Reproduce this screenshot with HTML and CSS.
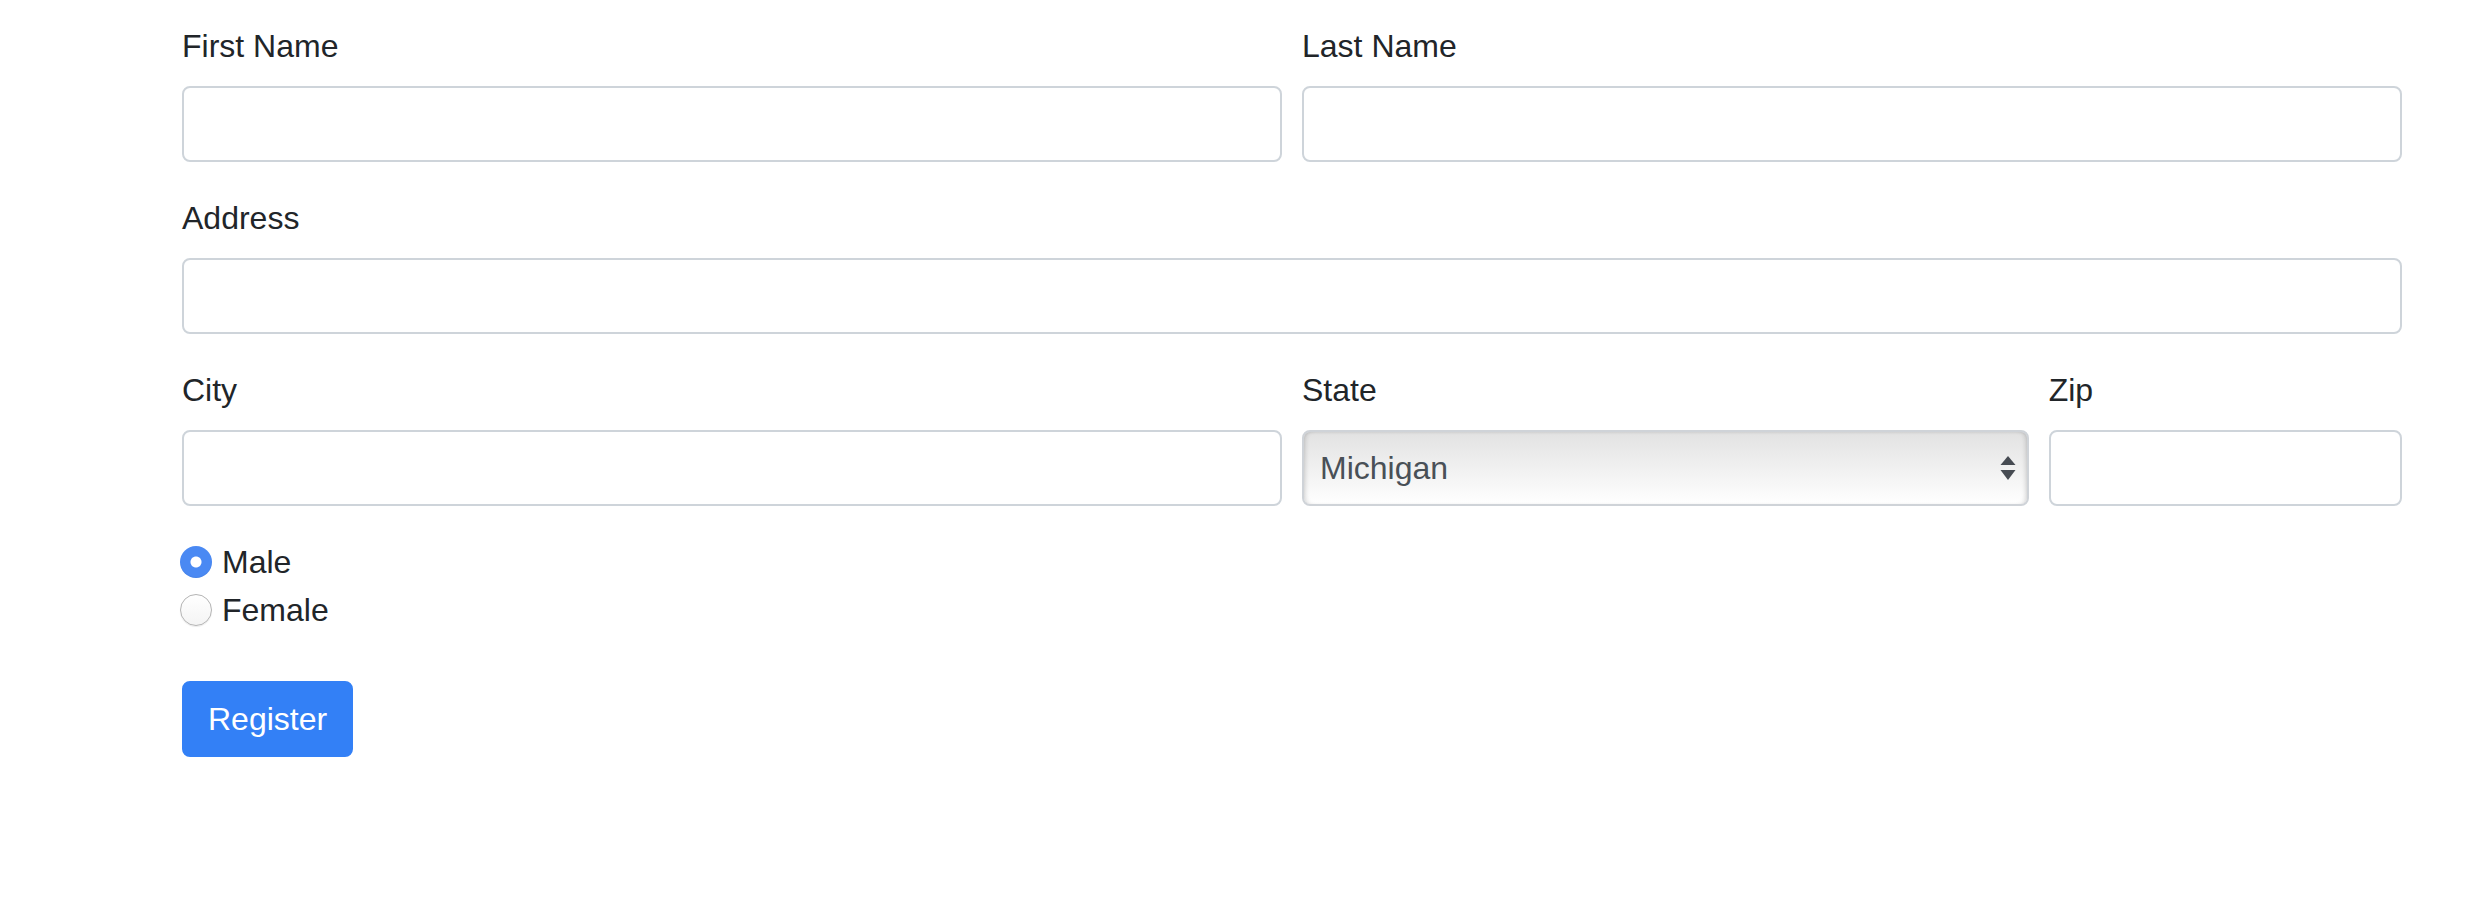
FILE: index.html
```html
<!DOCTYPE html>
<html>
<head>
<meta charset="utf-8">
<title>Register</title>
<link rel="stylesheet" href="styles.css">
</head>
<body>
<form class="page">
  <div class="grid">
    <div class="group span6">
      <label class="label" for="fn">First Name</label>
      <input class="control" id="fn" type="text">
    </div>
    <div class="group span6">
      <label class="label" for="ln">Last Name</label>
      <input class="control" id="ln" type="text">
    </div>
  </div>
  <div class="group">
    <label class="label" for="addr">Address</label>
    <input class="control" id="addr" type="text">
  </div>
  <div class="grid">
    <div class="group span6">
      <label class="label" for="city">City</label>
      <input class="control" id="city" type="text">
    </div>
    <div class="group span4">
      <label class="label" for="state">State</label>
      <div class="select-wrap">
        <select class="control select" id="state">
          <option>Michigan</option>
        </select>
        <svg class="arrows" width="16" height="26" viewBox="0 0 16 26">
          <path d="M8 0 L15.5 9 L0.5 9 Z" fill="#464b52"/>
          <path d="M0.5 14 L15.5 14 L8 24 Z" fill="#464b52"/>
        </svg>
      </div>
    </div>
    <div class="group span2">
      <label class="label" for="zip">Zip</label>
      <input class="control" id="zip" type="text">
    </div>
  </div>
  <div class="radios">
    <label class="check"><input class="radio" type="radio" name="g" checked><span>Male</span></label>
    <label class="check"><input class="radio" type="radio" name="g"><span>Female</span></label>
  </div>
  <button class="btn" type="button">Register</button>
</form>
</body>
</html>
```

FILE: styles.css
```css
* { box-sizing: border-box; }
html, body { margin: 0; padding: 0; background: #fff; }
body {
  font-family: "Liberation Sans", Arial, sans-serif;
  font-size: 32px;
  line-height: 48px;
  color: #212529;
}
.page {
  width: 2220px;
  margin-left: 182px;
  padding-top: 22px;
}
.grid {
  display: grid;
  grid-template-columns: repeat(12, 1fr);
  column-gap: 20px;
}
.span6 { grid-column: span 6; }
.span4 { grid-column: span 4; }
.span2 { grid-column: span 2; }
.group { margin-bottom: 32px; }
.label {
  display: block;
  margin-bottom: 16px;
  line-height: 48px;
}
.control {
  display: block;
  width: 100%;
  height: 76px;
  padding: 12px 24px;
  font-family: inherit;
  font-size: 32px;
  line-height: 48px;
  color: #495057;
  background: #fff;
  border: 2px solid #ced4da;
  border-radius: 8px;
  outline: none;
}
.select-wrap { position: relative; }
.select {
  -webkit-appearance: none;
  appearance: none;
  padding: 12px 50px 12px 16px;
  background: linear-gradient(to bottom, #e2e2e2 0%, #ececec 35%, #f6f6f6 70%, #ffffff 100%);
  box-shadow: inset 4px 0 5px -3px rgba(0,0,0,0.18), inset -4px 0 5px -3px rgba(0,0,0,0.18), inset 0 2px 3px -1px rgba(0,0,0,0.06);
  border-color: #cfd3d8;
}
.arrows {
  position: absolute;
  right: 13px;
  top: 26px;
  pointer-events: none;
}
.radios { margin-bottom: 47px; }
.check {
  position: relative;
  display: block;
  padding-left: 40px;
  line-height: 48px;
}
.radio {
  -webkit-appearance: none;
  appearance: none;
  position: absolute;
  left: -2px;
  top: 8px;
  width: 32px;
  height: 32px;
  margin: 0;
  border-radius: 50%;
  border: 1px solid #b4b4b4;
  background: linear-gradient(#ffffff, #f4f4f4);
  box-shadow: 0 1px 1px rgba(0,0,0,0.08);
}
.radio:checked {
  border: none;
  background: radial-gradient(circle at 50% 50%, #ffffff 0, #ffffff 5px, #4a89f3 6px, #4a89f3 100%);
  box-shadow: inset 0 -1px 1px rgba(0,0,0,0.05);
}
.btn {
  display: inline-block;
  height: 76px;
  padding: 12px 24px;
  font-family: inherit;
  font-size: 32px;
  line-height: 48px;
  color: #fff;
  background: #3380f6;
  border: 2px solid #3380f6;
  border-radius: 8px;
}
```
